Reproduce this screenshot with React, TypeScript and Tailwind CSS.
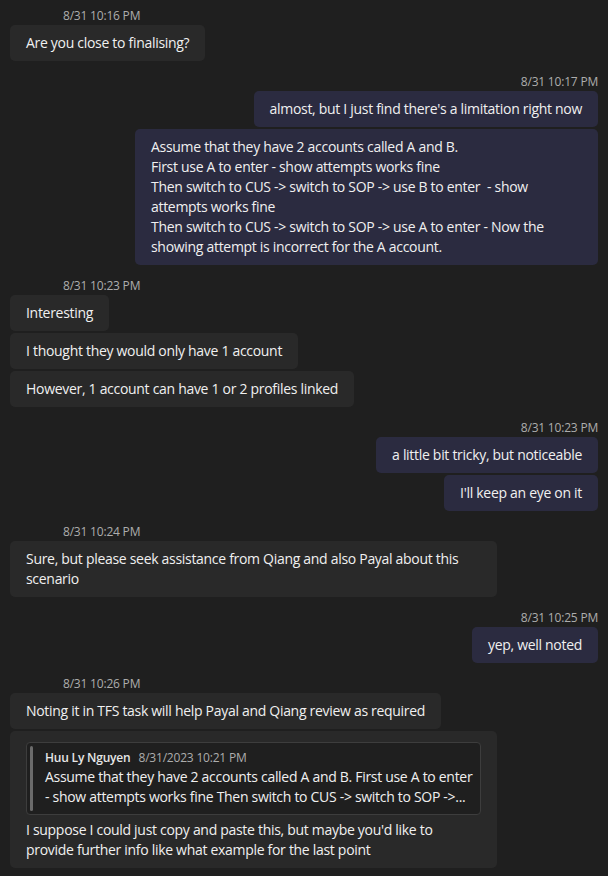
import React from "react";

const font = { fontFamily: '"Segoe UI", "Open Sans", "Noto Sans", sans-serif' };

function Stamp({ t, right }: { t: string; right?: boolean }) {
  return (
    <div
      className={`h-4 mt-[1px] mb-[1px] text-[12px] leading-4 tracking-[-0.2px] text-[#adadad] ${right ? "text-right" : "pl-[53px]"}`}
    >
      {t}
    </div>
  );
}

function Left({ children, className = "" }: { children: React.ReactNode; className?: string }) {
  return (
    <div className={`self-start bg-[#292929] rounded-[5px] px-4 py-2 text-[14px] leading-5 tracking-[-0.3px] text-[#f0f0f0] ${className}`}>
      {children}
    </div>
  );
}

function Right({ children, className = "" }: { children: React.ReactNode; className?: string }) {
  return (
    <div className={`self-end bg-[#2b2b40] rounded-[5px] px-4 py-2 text-[14px] leading-5 tracking-[-0.3px] text-[#f0f0f0] ${className}`}>
      {children}
    </div>
  );
}

export default function App() {
  return (
    <div className="min-h-[876px] w-[608px] bg-[#1f1f1f] px-[10px] pt-[7px] overflow-hidden" style={font}>
      <div className="flex flex-col gap-3">
        <div className="flex flex-col">
          <Stamp t="8/31 10:16 PM" />
          <Left>Are you close to finalising?</Left>
        </div>

        <div className="flex flex-col">
          <Stamp t="8/31 10:17 PM" right />
          <div className="flex flex-col gap-[2px]">
            <Right>almost, but I just find there's a limitation right now</Right>
            <Right className="w-[463px]">
              Assume that they have 2 accounts called A and B.
              <br />
              First use A to enter - show attempts works fine
              <br />
              Then switch to CUS -&gt; switch to SOP -&gt; use B to enter&nbsp; - show
              <br />
              attempts works fine
              <br />
              Then switch to CUS -&gt; switch to SOP -&gt; use A to enter - Now the
              <br />
              showing attempt is incorrect for the A account.
            </Right>
          </div>
        </div>

        <div className="flex flex-col">
          <Stamp t="8/31 10:23 PM" />
          <div className="flex flex-col gap-[2px]">
            <Left>Interesting</Left>
            <Left>I thought they would only have 1 account</Left>
            <Left>However, 1 account can have 1 or 2 profiles linked</Left>
          </div>
        </div>

        <div className="flex flex-col">
          <Stamp t="8/31 10:23 PM" right />
          <div className="flex flex-col gap-[2px]">
            <Right>a little bit tricky, but noticeable</Right>
            <Right>I'll keep an eye on it</Right>
          </div>
        </div>

        <div className="flex flex-col">
          <Stamp t="8/31 10:24 PM" />
          <Left className="w-[487px]">
            Sure, but please seek assistance from Qiang and also Payal about this
            <br />
            scenario
          </Left>
        </div>

        <div className="flex flex-col">
          <Stamp t="8/31 10:25 PM" right />
          <Right>yep, well noted</Right>
        </div>

        <div className="flex flex-col">
          <Stamp t="8/31 10:26 PM" />
          <div className="flex flex-col gap-[2px]">
            <Left>Noting it in TFS task will help Payal and Qiang review as required</Left>
            <Left className="w-[487px] pt-[11px]">
              <div className="flex gap-[12px] rounded-[4px] border border-[#3d3d3d] bg-[#1f1f1f] p-[3px] pr-1">
                <div className="w-[3px] shrink-0 rounded-full bg-[#6b6b6b]" />
                <div className="min-w-0 pt-[3px] pb-[4px]">
                  <div className="flex gap-2 text-[12px] leading-[18px] tracking-[-0.2px]">
                    <span className="font-semibold text-[#e6e6e6]">Huu Ly Nguyen</span>
                    <span className="text-[#adadad]">8/31/2023 10:21 PM</span>
                  </div>
                  <div className="whitespace-nowrap">
                    Assume that they have 2 accounts called A and B. First use A to enter
                  </div>
                  <div className="whitespace-nowrap">
                    - show attempts works fine Then switch to CUS -&gt; switch to SOP -&gt;...
                  </div>
                </div>
              </div>
              <div className="mt-[5px]">
                I suppose I could just copy and paste this, but maybe you'd like to
                <br />
                provide further info like what example for the last point
              </div>
            </Left>
          </div>
        </div>
      </div>
    </div>
  );
}
